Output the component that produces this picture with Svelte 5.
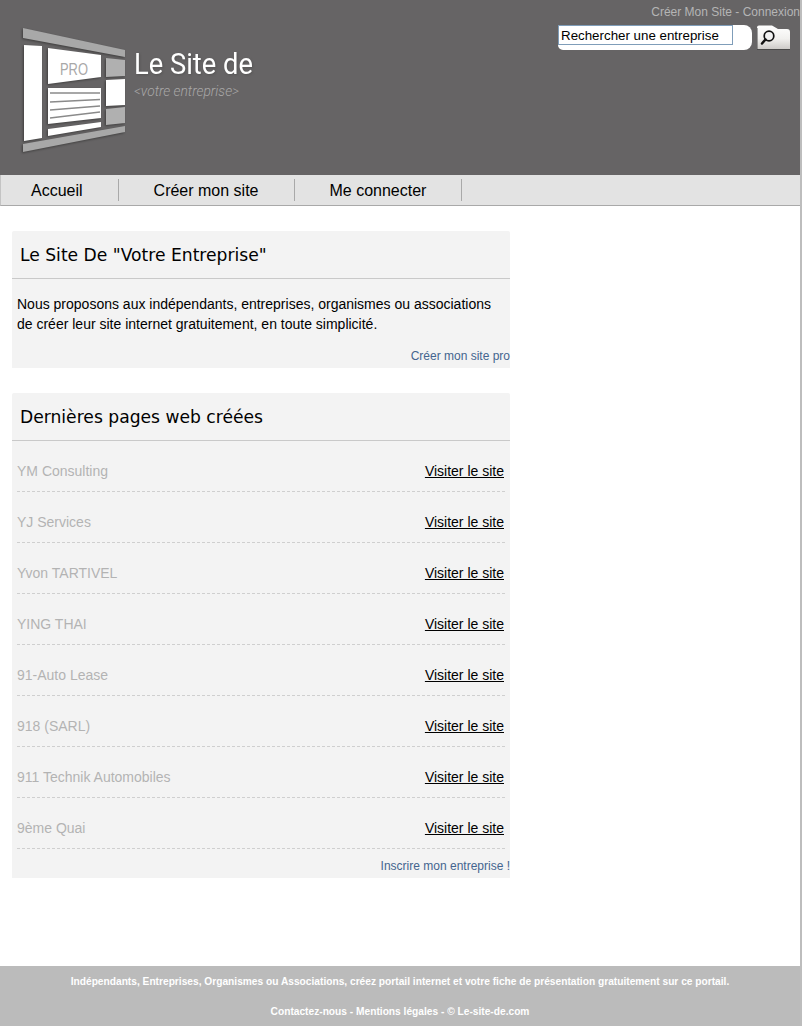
<script>
  const pages = [
    "YM Consulting",
    "YJ Services",
    "Yvon TARTIVEL",
    "YING THAI",
    "91-Auto Lease",
    "918 (SARL)",
    "911 Technik Automobiles",
    "9ème Quai"
  ];
</script>

<style>
  :global(body) {
    background: #fff;
    font-family: "Liberation Sans", Arial, sans-serif;
  }

  .page {
    width: 800px;
    height: 1026px;
    display: flex;
    flex-direction: column;
    border-right: 2px solid #bdbdbd;
  }

  .head {
    height: 175px;
    background: #666465;
    display: flex;
    justify-content: space-between;
  }
  .logo {
    display: block;
    margin: 25px 0 0 20px;
  }
  .logo .art {
    filter: drop-shadow(-1px 1px 1px #3f3e3e);
  }
  .logo .mark {
    font-family: "Liberation Sans", sans-serif;
    font-size: 17px;
    fill: #a8a8a8;
  }
  .logo .name {
    font-family: "Roboto", "Liberation Sans", sans-serif;
    font-size: 29px;
    fill: #fff;
    filter: drop-shadow(1px 1px 1px #565555);
  }
  .logo .sub {
    font-family: "Roboto", "Liberation Sans", sans-serif;
    font-size: 15px;
    font-style: italic;
    font-weight: 300;
    fill: #a9a8a8;
  }

  .tools {
    display: flex;
    flex-direction: column;
    align-items: flex-end;
  }
  .account {
    font-size: 12px;
    line-height: 14px;
    margin-top: 5px;
    color: #b5b5b5;
  }
  .find {
    display: flex;
    gap: 5px;
    margin: 6px 10px 0 0;
  }
  .box {
    width: 194px;
    height: 25px;
    background: #fff;
    border-radius: 0 8px 8px 5px;
  }
  .box input {
    display: block;
    width: 175px;
    height: 20px;
    box-sizing: border-box;
    border: 1px solid #7f9db9;
    padding: 0 2px;
    font: 13.33px "Liberation Sans", Arial, sans-serif;
    color: #000;
    background: #fff;
  }
  .go {
    width: 33px;
    height: 25px;
    padding: 0;
    border: 0;
    background: none;
  }
  .go svg {
    display: block;
  }

  .menu {
    height: 30px;
    background: #e3e3e3;
    border-bottom: 1px solid #a9a9a9;
    border-left: 1px solid #c4c4c4;
    display: flex;
    align-items: center;
    font-size: 16px;
  }
  .menu a {
    height: 22px;
    line-height: 24px;
    padding: 0 35px;
    color: #000;
    text-decoration: none;
    border-right: 1px solid #a9a9a9;
  }
  .menu a:first-child {
    padding: 0 35px 0 30px;
  }

  main {
    flex: 1;
    width: 498px;
    margin-left: 12px;
    padding-top: 25px;
    display: flex;
    flex-direction: column;
    gap: 25px;
  }
  .card {
    background: #f3f3f3;
    border-radius: 2px 2px 0 0;
    font-size: 14px;
  }
  h2 {
    margin: 0;
    height: 46px;
    padding: 1px 0 0 8px;
    border-bottom: 1px solid #c9c9c9;
    font: 400 17.15px/46px "DejaVu Sans", Verdana, sans-serif;
    color: #000;
  }
  .card p {
    margin: 15px 0 0;
    padding: 0 5px;
    line-height: 20px;
    color: #000;
  }
  .more {
    text-align: right;
    font-size: 12px;
    line-height: 14px;
    color: #44658f;
  }
  .intro .more {
    padding: 15px 0 5px;
  }
  .list {
    margin: 0;
    padding: 0 5px;
    list-style: none;
  }
  .list li {
    height: 30px;
    padding: 20px 1px 0 0;
    border-bottom: 1px dashed #cfcfcf;
    display: flex;
    justify-content: space-between;
    line-height: 20px;
  }
  .list .who {
    color: #b3b3b3;
  }
  .list a {
    height: 20px;
    color: #000;
    text-decoration: underline;
  }
  .latest .more {
    padding: 10px 0 5px;
  }

  footer {
    height: 60px;
    box-sizing: border-box;
    background: #bbb;
    color: #fff;
    font-size: 10.2px;
    font-weight: 700;
    text-align: center;
    line-height: 14px;
    padding-top: 9px;
  }
  footer p {
    margin: 0 0 16px;
  }
</style>

<div class="page">
  <header class="head">
    <svg class="logo" width="260" height="135" viewBox="20 25 260 135">
      <g class="art">
        <polygon points="23,28 125,50 125,57 23,38" fill="#a8a8a8" />
        <polygon points="24,45 42,46 42,138 24,141" fill="#fff" />
        <polygon points="48,48 101,55 101,77 48,84" fill="#fff" />
        <polygon points="106,58 125,60 125,76 106,77" fill="#b0b0b0" />
        <polygon points="106,80 125,79 125,105 106,106" fill="#fff" />
        <polygon points="106,109 125,107 125,123 106,125" fill="#b0b0b0" />
        <polygon points="48,88 101,88 101,118 48,124" fill="#fff" />
        <polygon points="48,129 101,122 101,127 48,136" fill="#fff" />
        <polygon points="23,144 125,126 125,132 23,152" fill="#a8a8a8" />
      </g>
      <path d="M50 93h50M50 102l50-2.500M50 110l50-4M50 118l50-6" stroke="#8a8a8a" stroke-width="1.300" fill="none" />
      <text class="mark" x="60" y="75" textLength="28" lengthAdjust="spacingAndGlyphs">PRO</text>
      <text class="name" x="134" y="74" textLength="119" lengthAdjust="spacingAndGlyphs">Le Site de</text>
      <text class="sub" x="134" y="96" textLength="105" lengthAdjust="spacingAndGlyphs">&lt;votre entreprise&gt;</text>
    </svg>

    <div class="tools">
      <div class="account">Créer Mon Site - Connexion</div>
      <div class="find">
        <div class="box"><input value="Rechercher une entreprise" /></div>
        <button class="go" aria-label="Rechercher">
          <svg width="33" height="25" viewBox="0 0 33 25">
            <defs>
              <linearGradient id="goFill" x1="0" y1="0" x2="0" y2="1">
                <stop offset="0" stop-color="#fff" />
                <stop offset=".55" stop-color="#f1f0ee" />
                <stop offset="1" stop-color="#cbc9c6" />
              </linearGradient>
            </defs>
            <path d="M2 0.500H15L21 4H30Q33 4 33 7V24.500H0V2.500Q0 .500 2 .500Z" fill="url(#goFill)" />
            <path d="M0 3V24.500H33" fill="none" stroke="#4a4a4a" stroke-width="1" />
            <circle cx="12" cy="11" r="4.800" fill="#f2f2f2" stroke="#111" stroke-width="1.700" />
            <path d="M8.500 14.500L5 18.500" stroke="#111" stroke-width="2.500" stroke-linecap="round" />
          </svg>
        </button>
      </div>
    </div>
  </header>

  <nav class="menu">
    <a href="#accueil">Accueil</a>
    <a href="#creer">Créer mon site</a>
    <a href="#connexion">Me connecter</a>
  </nav>

  <main>
    <section class="card intro">
      <h2>Le Site De "Votre Entreprise"</h2>
      <p>Nous proposons aux indépendants, entreprises, organismes ou associations de créer leur site internet gratuitement, en toute simplicité.</p>
      <div class="more">Créer mon site pro</div>
    </section>

    <section class="card latest">
      <h2>Dernières pages web créées</h2>
      <ul class="list">
        {#each pages as name}
          <li><span class="who">{name}</span><a href="#site">Visiter le site</a></li>
        {/each}
      </ul>
      <div class="more">Inscrire mon entreprise !</div>
    </section>
  </main>

  <footer>
    <p>Indépendants, Entreprises, Organismes ou Associations, créez portail internet et votre fiche de présentation gratuitement sur ce portail.</p>
    <p>Contactez-nous - Mentions légales - © Le-site-de.com</p>
  </footer>
</div>
